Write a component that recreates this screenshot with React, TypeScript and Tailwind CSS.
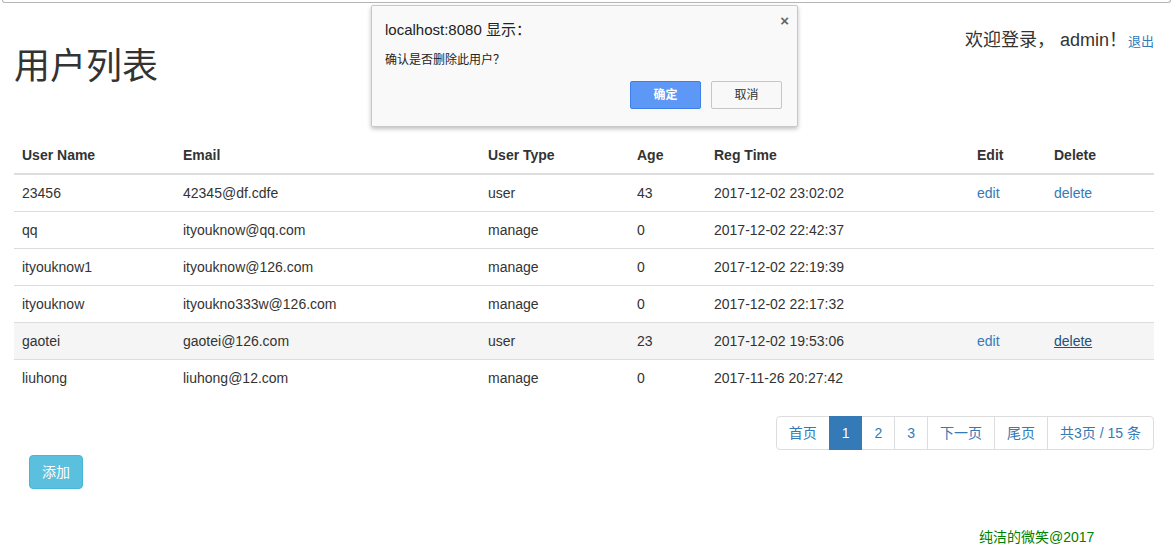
import React from 'react';

const users = [
  { name: '23456', email: '42345@df.cdfe', type: 'user', age: '43', time: '2017-12-02 23:02:02', actions: true },
  { name: 'qq', email: 'ityouknow@qq.com', type: 'manage', age: '0', time: '2017-12-02 22:42:37', actions: false },
  { name: 'ityouknow1', email: 'ityouknow@126.com', type: 'manage', age: '0', time: '2017-12-02 22:19:39', actions: false },
  { name: 'ityouknow', email: 'ityoukno333w@126.com', type: 'manage', age: '0', time: '2017-12-02 22:17:32', actions: false },
  { name: 'gaotei', email: 'gaotei@126.com', type: 'user', age: '23', time: '2017-12-02 19:53:06', actions: true, hover: true },
  { name: 'liuhong', email: 'liuhong@12.com', type: 'manage', age: '0', time: '2017-11-26 20:27:42', actions: false },
];

const font = "font-['Liberation_Sans','Noto_Sans_CJK_SC',sans-serif]";

const ConfirmDialog = () => (
  <div className="absolute left-[371px] top-[5px] w-[427px] h-[122px] bg-[#f9f9f9] border border-[#c8c8c8] rounded-[2px] shadow-[0_2px_4px_rgba(0,0,0,0.25)]">
    <button className="absolute right-[8px] top-[7px] text-[#666] text-[15px] font-bold leading-none">×</button>
    <div className="pl-[13px] pt-[15px] text-[15px] leading-[18px] text-[#222]">localhost:8080 显示：</div>
    <div className="pl-[13px] pt-[14px] text-[12px] leading-[14px] text-[#222]">确认是否删除此用户？</div>
    <div className="flex justify-end gap-[10px] pr-[15px] pt-[14px]">
      <button className="w-[71px] h-[28px] bg-[#5d98f6] border border-[#3f7fe8] rounded-[2px] text-white text-[12px] font-bold">确定</button>
      <button className="w-[71px] h-[28px] bg-[#f8f8f8] border border-[#c6c6c6] rounded-[2px] text-[#333] text-[12px]">取消</button>
    </div>
  </div>
);

const Pagination = () => {
  const base = 'h-[34px] px-[12px] flex items-center border -ml-px text-[14px]';
  const normal = `${base} border-[#ddd] bg-white text-[#337ab7]`;
  return (
    <div className="flex">
      <span className={`${normal} ml-0 rounded-l-[4px]`}>首页</span>
      <span className={`${base} border-[#337ab7] bg-[#337ab7] text-white z-10`}>1</span>
      <span className={normal}>2</span>
      <span className={normal}>3</span>
      <span className={normal}>下一页</span>
      <span className={normal}>尾页</span>
      <span className={`${normal} rounded-r-[4px]`}>共3页 / 15 条</span>
    </div>
  );
};

export default function App() {
  return (
    <div className={`relative w-[1173px] h-[553px] bg-white text-[#333] overflow-hidden ${font}`}>
      <div className="mx-[2px] h-[3px] border-b border-x border-[#b5b5b5] rounded-b-[3px]" />
      <ConfirmDialog />
      <div className="pl-[14px] pr-[19px]">
        <div className="flex justify-between items-start">
          <h1 className="mt-[44px] text-[36px] leading-[40px] font-normal">用户列表</h1>
          <div className="mt-[24px] flex items-baseline">
            <span className="text-[18px] leading-[26px]">欢迎登录， admin！</span>
            <a className="text-[13px] text-[#337ab7] ml-[1px]">退出</a>
          </div>
        </div>
        <table className="mt-[50px] w-full border-collapse text-[14px] leading-[20px]">
          <colgroup>
            <col className="w-[161px]" />
            <col className="w-[305px]" />
            <col className="w-[149px]" />
            <col className="w-[77px]" />
            <col className="w-[263px]" />
            <col className="w-[77px]" />
            <col className="w-[108px]" />
          </colgroup>
          <thead>
            <tr>
              {['User Name', 'Email', 'User Type', 'Age', 'Reg Time', 'Edit', 'Delete'].map((h) => (
                <th key={h} className="p-[8px] text-left font-bold border-b-2 border-[#ddd]">{h}</th>
              ))}
            </tr>
          </thead>
          <tbody>
            {users.map((u) => (
              <tr key={u.name} className={u.hover ? 'bg-[#f5f5f5]' : ''}>
                <td className="p-[8px] border-t border-[#ddd]">{u.name}</td>
                <td className="p-[8px] border-t border-[#ddd]">{u.email}</td>
                <td className="p-[8px] border-t border-[#ddd]">{u.type}</td>
                <td className="p-[8px] border-t border-[#ddd]">{u.age}</td>
                <td className="p-[8px] border-t border-[#ddd]">{u.time}</td>
                <td className="p-[8px] border-t border-[#ddd]">
                  {u.actions && <a className="text-[#337ab7]">edit</a>}
                </td>
                <td className="p-[8px] border-t border-[#ddd]">
                  {u.actions && (
                    <a className={u.hover ? 'text-[#23527c] underline' : 'text-[#337ab7]'}>delete</a>
                  )}
                </td>
              </tr>
            ))}
          </tbody>
        </table>
        <div className="mt-[20px] flex justify-end">
          <Pagination />
        </div>
        <button className="mt-[5px] ml-[15px] h-[34px] px-[12px] bg-[#5bc0de] border border-[#46b8da] rounded-[4px] text-white text-[14px]">
          添加
        </button>
        <div className="mt-[38px] pl-[965px] text-[14px] leading-[20px] text-[#008000]">纯洁的微笑@2017</div>
      </div>
    </div>
  );
}
